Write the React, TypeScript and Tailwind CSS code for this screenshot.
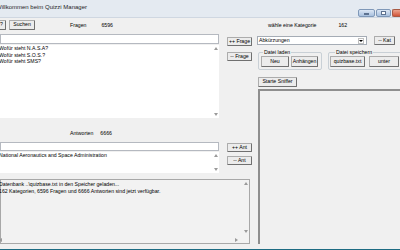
import React from "react";

type P = { children?: React.ReactNode; className?: string };

const Btn = ({ children, className = "" }: P) => (
  <div
    className={
      "flex items-center justify-center shrink-0 whitespace-nowrap leading-none bg-[#ececec] border border-[#acacac] border-r-[#707070] border-b-[#707070] rounded-[1px] " +
      className
    }
  >
    {children}
  </div>
);

const Up = () => (
  <svg width="4" height="3" viewBox="0 0 4 3">
    <path d="M0 3 L2 0 L4 3 Z" fill="#9a9a9a" />
  </svg>
);
const Down = () => (
  <svg width="4" height="3" viewBox="0 0 4 3">
    <path d="M0 0 L2 3 L4 0 Z" fill="#9a9a9a" />
  </svg>
);
const Right = () => (
  <svg width="3" height="4" viewBox="0 0 3 4">
    <path d="M0 0 L3 2 L0 4 Z" fill="#9a9a9a" />
  </svg>
);

const VScroll = ({ className = "" }: P) => (
  <div className={"w-[7px] shrink-0 flex flex-col items-center justify-between py-[2px] " + className}>
    <Up />
    <Down />
  </div>
);

export default function App() {
  return (
    <div className="w-[400px] h-[250px] overflow-hidden flex flex-col bg-[#f0f0f0] text-black font-['Liberation_Sans',Arial,sans-serif] text-[5.2px] leading-none">
      {/* title bar */}
      <div className="h-[18px] shrink-0 flex justify-between bg-[#e4eaf1] border-b border-[#cfd7e1]">
        <div className="text-[6px] pt-[4px] -ml-[4px] text-[#1e1e1e] whitespace-nowrap">Willkommen beim Quizzi Manager</div>
        <div className="flex items-start pt-[9px]">
          <div className="w-[17px] h-[8px] rounded-[2px] border border-[#7f98b8] bg-gradient-to-b from-[#dce7f5] to-[#a8c0de] flex items-end justify-center pb-[1px]">
            <div className="w-[5px] h-[2px] bg-white border border-[#5d7290]" />
          </div>
          <div className="w-[15px] h-[8px] ml-[1px] rounded-[2px] border border-[#7f98b8] bg-gradient-to-b from-[#dce7f5] to-[#a8c0de] flex items-center justify-center">
            <div className="w-[5px] h-[4px] border border-[#5d7290] bg-white" />
          </div>
          <div className="w-[8px] h-[8px] ml-[1px] rounded-l-[2px] border border-r-0 border-[#a85a44] bg-gradient-to-b from-[#eba48f] to-[#cf5237]" />
        </div>
      </div>

      {/* client */}
      <div className="flex-1 flex pb-[5px]">
        {/* left column */}
        <div className="w-[252px] shrink-0 flex flex-col">
          <div className="mt-[1px] h-[11px] flex items-center">
            <Btn className="w-[12px] h-[10px] -ml-[6px] justify-end pr-[2px]">?</Btn>
            <Btn className="w-[26px] h-[10px] ml-[3px]">Suchen</Btn>
            <span className="ml-[35px] mt-[2px]">Fragen</span>
            <span className="ml-[15px] mt-[2px]">6596</span>
          </div>

          <div className="mt-[4px] flex">
            <div className="w-[219px] flex flex-col">
              <div className="h-[10px] bg-white border border-[#b5b9c0]" />
              <div className="h-[73px] mt-[1px] bg-white flex">
                <div className="flex-1 -ml-[1px] pt-[1px] flex flex-col gap-[1.5px] whitespace-nowrap">
                  <span>Wofür steht N.A.S.A?</span>
                  <span>Wofür steht S.O.S.?</span>
                  <span>Wofür steht SMS?</span>
                </div>
                <VScroll />
              </div>
            </div>
            <div className="ml-[8px] flex flex-col">
              <Btn className="w-[25px] h-[9px] mt-[3px]">++ Frage</Btn>
              <Btn className="w-[25px] h-[9px] mt-[6px]">-- Frage</Btn>
            </div>
          </div>

          <div className="mt-[12px] h-[8px] flex items-center">
            <span className="ml-[70px]">Antworten</span>
            <span className="ml-[7px]">6666</span>
          </div>

          <div className="mt-[4px] flex">
            <div className="w-[219px] flex flex-col">
              <div className="h-[9px] bg-white border border-[#b5b9c0]" />
              <div className="h-[21px] mt-[1px] bg-white flex">
                <div className="flex-1 -ml-[1px] pt-[1px] whitespace-nowrap">National Aeronautics and Space Administration</div>
                <VScroll />
              </div>
            </div>
            <div className="ml-[8px] flex flex-col">
              <Btn className="w-[25px] h-[9px] mt-[1px]">++ Ant</Btn>
              <Btn className="w-[25px] h-[9px] mt-[4px]">-- Ant</Btn>
            </div>
          </div>

          <div className="mt-[6px] w-[250px] h-[65px] border border-[#a8a8a8] bg-[#f2f2f2] flex flex-col">
            <div className="flex-1 flex">
              <div className="flex-1 -ml-[2px] pt-[2px] flex flex-col gap-[1.5px] whitespace-nowrap">
                <span>Datenbank ..\quizbase.txt in den Speicher geladen...</span>
                <span>162 Kategorien, 6596 Fragen und 6666 Antworten sind jetzt verfügbar.</span>
              </div>
              <VScroll className="mb-[1px]" />
            </div>
            <div className="h-[7px] flex items-center justify-between pr-[11px] -ml-[2px]">
              <svg width="3" height="4" viewBox="0 0 3 4">
                <path d="M3 0 L0 2 L3 4 Z" fill="#9a9a9a" />
              </svg>
              <Right />
            </div>
          </div>
        </div>

        {/* right column */}
        <div className="ml-[6px] flex-1 flex flex-col">
          <div className="mt-[1px] h-[11px] flex items-center">
            <span className="ml-[10px] mt-[2px]">wähle eine Kategorie</span>
            <span className="ml-[22px] mt-[2px]">162</span>
          </div>

          <div className="mt-[6px] h-[9px] flex">
            <div className="w-[110px] -ml-[1px] bg-white border border-[#a5acb5] flex items-center justify-between">
              <span className="pl-[1px]">Abkürzungen</span>
              <div className="w-[6px] h-[6px] mr-[2px] border border-[#c0c0c0] bg-white flex items-center justify-center">
                <svg width="4" height="2" viewBox="0 0 4 2">
                  <path d="M0 0 L2 2 L4 0 Z" fill="#000" />
                </svg>
              </div>
            </div>
            <Btn className="w-[21px] h-[9px] ml-[7px]">-- Kat</Btn>
          </div>

          <div className="mt-[7px] h-[18px] flex">
            <div className="relative w-[64px] h-[18px] border border-[#c9d0d6] rounded-[2px] flex items-end pb-[2px] pl-[2px] gap-[2px]">
              <span className="absolute -top-[3px] left-[4px] bg-[#f0f0f0] px-[1px]">Datei laden</span>
              <Btn className="w-[28px] h-[11px]">Neu</Btn>
              <Btn className="w-[27px] h-[11px]">Anhängen</Btn>
            </div>
            <div className="relative ml-[6px] w-[80px] h-[18px] border border-[#c9d0d6] rounded-[2px] flex items-end pb-[2px] pl-[1px] gap-[4px]">
              <span className="absolute -top-[3px] left-[6px] bg-[#f0f0f0] px-[1px]">Datei speichern</span>
              <Btn className="w-[35px] h-[11px]">quizbase.txt</Btn>
              <Btn className="w-[30px] h-[11px]">unter</Btn>
            </div>
          </div>

          <Btn className="mt-[7px] w-[39px] h-[10px]">Starte Sniffer</Btn>

          <div className="mt-[2px] flex-1 flex border-t-2 border-l-2 border-[#8e8e8e] bg-[#f0f0f0]">
            <div className="flex-1" />
            <div className="w-[5px] flex flex-col items-center justify-between py-[3px] -mr-[2px]">
              <Up />
              <Down />
            </div>
          </div>
        </div>
      </div>
      <div className="h-[2px] shrink-0 bg-[#1d6b82]" />
    </div>
  );
}
